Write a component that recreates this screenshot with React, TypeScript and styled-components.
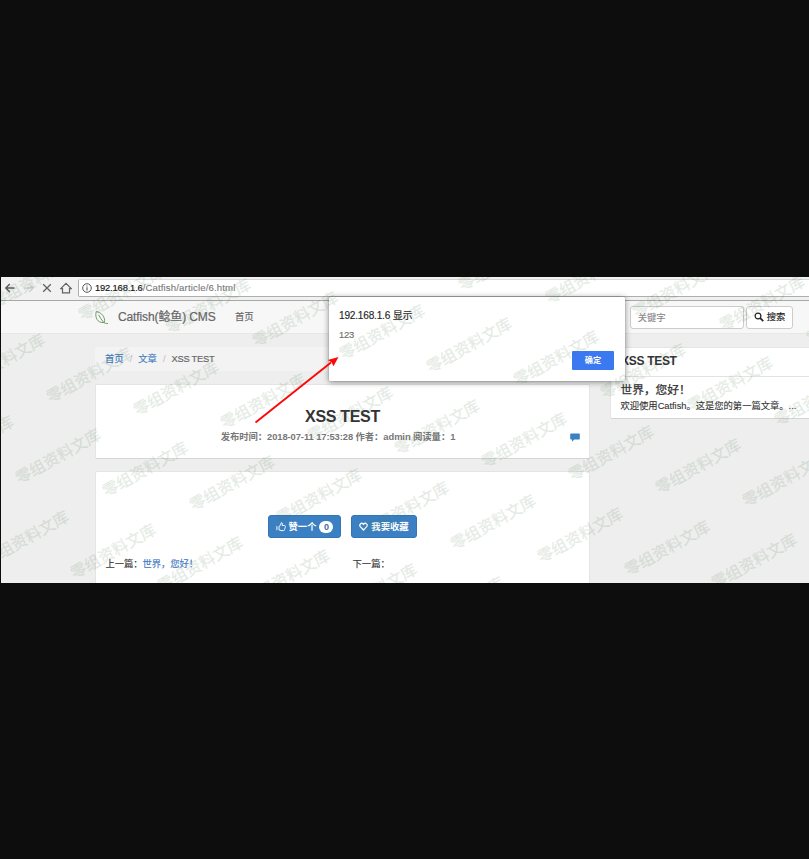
import React from "react";
import styled, { createGlobalStyle } from "styled-components";

const Global = createGlobalStyle`
  * { box-sizing: border-box; }
  html, body { margin: 0; padding: 0; background: #0d0d0d; }
  body { overflow: hidden; font-family: "Liberation Sans", "Noto Sans CJK SC", sans-serif; }
`;

const Stage = styled.div`
  width: 809px;
  height: 859px;
  padding: 277px 0 276px 1px;
  background: #0d0d0d;
`;

const Shot = styled.div`
  position: relative;
  height: 306px;
  overflow: hidden;
  background: #eeeeee;
  color: #333;
  font-size: 9.33px;
  line-height: 14px;
  white-space: nowrap;
`;

const Txt = styled.span<{ $ls?: number; $color?: string; $size?: number; $stroke?: number }>`
  letter-spacing: ${(p) => p.$ls ?? 0}px;
  color: ${(p) => p.$color ?? "inherit"};
  font-size: ${(p) => (p.$size ? `${p.$size}px` : "inherit")};
  -webkit-text-stroke: ${(p) => p.$stroke ?? 0}px currentColor;
`;

const BrowserBar = styled.div`
  display: flex;
  align-items: center;
  height: 24px;
  padding: 0 0 1px 3px;
  background: #f1f1f1;
  border-bottom: 1px solid #a8a8a8;
  svg { flex: none; }
`;

const Tools = styled.div`
  display: flex;
  align-items: center;
  gap: 6.6px;
  width: 74px;
`;

const Address = styled.div`
  display: flex;
  align-items: center;
  flex: 1;
  height: 18px;
  margin-right: -4px;
  padding-left: 2.5px;
  background: #fff;
  border: 1px solid #aeaeae;
  border-top-color: #d8d8d8;
  border-radius: 2px;
  svg { margin-right: 3.5px; }
`;

const Navbar = styled.div`
  display: flex;
  align-items: center;
  height: 33px;
  padding-left: 94px;
  background: #f7f7f7;
  border-bottom: 1px solid #e7e7e7;
  color: #666;
`;

const Brand = styled.div`
  width: 126px;
  padding-left: 9px;
  font-size: 12px;
`;

const Search = styled.div`
  display: flex;
  gap: 2px;
  margin-left: 376px;
`;

const Field = styled.div`
  width: 114px;
  height: 23px;
  padding: 4px 7px;
  background: #fff;
  border: 1px solid #ccc;
  border-radius: 3px;
  color: #888;
`;

const SearchButton = styled.div`
  display: flex;
  align-items: center;
  gap: 3px;
  width: 47px;
  height: 23px;
  padding-left: 7px;
  background: #fff;
  border: 1px solid #ccc;
  border-radius: 3px;
  color: #222;
`;

const Content = styled.div`
  display: flex;
  align-items: flex-start;
  gap: 20px;
  padding: 13px 0 0 94px;
`;

const Main = styled.div`
  display: flex;
  flex-direction: column;
  width: 495px;
`;

const Crumbs = styled.div`
  display: flex;
  gap: 6px;
  height: 24px;
  padding: 5px 10px;
  background: #f3f3f3;
  border-radius: 3px;
  color: #666;
`;

const Link = styled.span`
  color: #3f7ac0;
`;

const Panel = styled.div`
  background: #fff;
  border: 1px solid #e4e4e4;
  border-radius: 2px;
`;

const TitlePanel = styled(Panel)`
  height: 75px;
  margin-top: 13px;
  padding-top: 22px;
  text-align: center;
  border-bottom-color: #d6d6d6;
`;

const Title = styled.div`
  height: 20px;
  line-height: 20px;
  font-size: 16px;
  font-weight: 700;
`;

const MetaRow = styled.div`
  display: grid;
  grid-template-columns: 10px 1fr 19px;
  align-items: center;
  height: 20px;
  color: #777;
  font-weight: 700;
`;

const BodyPanel = styled(Panel)`
  height: 130px;
  margin-top: 12px;
  padding-top: 43px;
`;

const Actions = styled.div`
  display: flex;
  justify-content: center;
  gap: 10px;
`;

const Action = styled.div<{ $w: number }>`
  display: flex;
  align-items: center;
  justify-content: center;
  gap: 3px;
  width: ${(p) => p.$w}px;
  height: 23px;
  background: #3a80c2;
  border: 1px solid #3276b7;
  border-radius: 3px;
  color: #fff;
  font-weight: 700;
`;

const Count = styled.span`
  width: 14px;
  height: 12px;
  border-radius: 6px;
  background: #fff;
  color: #3a70a8;
  font-size: 9px;
  line-height: 12px;
  text-align: center;
`;

const Siblings = styled.div`
  display: grid;
  grid-template-columns: 247px 1fr;
  padding: 19px 0 0 9.5px;
`;

const Side = styled(Panel)`
  flex: 1;
  height: 72px;
  margin-right: -10px;
  border-bottom-color: #d4d4d4;
`;

const SideHead = styled.div`
  height: 29px;
  padding: 6px 10px;
  font-size: 12px;
  font-weight: 700;
  border-bottom: 1px solid #e2e2e2;
`;

const SideBody = styled.div`
  padding: 5px 9.5px;
  line-height: 15px;
`;

const Dialog = styled.div`
  position: absolute;
  left: 328px;
  top: 20px;
  display: flex;
  flex-direction: column;
  width: 296px;
  height: 84px;
  padding: 12px 10px 0;
  background: #fff;
  border-radius: 1px;
  box-shadow: 0 1px 6px rgba(0, 0, 0, 0.45), 0 0 1px rgba(0, 0, 0, 0.5);
  color: #222;
`;

const Message = styled.div`
  margin-top: 5px;
  color: #6e6e6e;
`;

const Confirm = styled.div`
  align-self: flex-end;
  width: 42px;
  height: 19px;
  margin: 9px 1px 0 0;
  background: #3b79f0;
  border-radius: 1px;
  color: #fff;
  font-size: 8.2px;
  font-weight: 700;
  line-height: 19px;
  text-align: center;
`;

const Overlay = styled.svg`
  position: absolute;
  left: -1px;
  top: 0;
  pointer-events: none;
`;

const Marks = styled.div`
  position: absolute;
  inset: 0;
  overflow: hidden;
  pointer-events: none;
`;

const Mark = styled.span`
  position: absolute;
  width: 100px;
  height: 20px;
  margin: -10px 0 0 -50px;
  color: rgb(70, 115, 70);
  opacity: 0.145;
  font-family: "Noto Sans CJK SC", sans-serif;
  font-size: 15.8px;
  line-height: 20px;
  text-align: center;
  -webkit-text-stroke: 0.2px currentColor;
  transform: rotate(-29.2deg);
`;

const marks: { x: number; y: number }[] = [];
for (let a = -10; a < 12; a++) {
  for (let b = -5; b < 6; b++) {
    const x = 381.3 + a * 87 - b * 31.9;
    const y = 55 + a * 13.1 + b * 81.8;
    if (x > -45 && x < 852 && y > -25 && y < 330) marks.push({ x, y });
  }
}

const BackIcon = () => (
  <svg width="12" height="12" viewBox="0 0 12 12" fill="none" stroke="#555b61" strokeWidth="1.4">
    <path d="M10.5 6H2M5.8 2L1.8 6l4 4" />
  </svg>
);
const ForwardIcon = () => (
  <svg width="12" height="12" viewBox="0 0 12 12" fill="none" stroke="#cdd0cd" strokeWidth="1.4">
    <path d="M1.5 6H10M6.2 2l4 4-4 4" />
  </svg>
);
const StopIcon = () => (
  <svg width="12" height="12" viewBox="0 0 12 12" fill="none" stroke="#5d6267" strokeWidth="1.3">
    <path d="M2.2 2.2l7.6 7.6M9.8 2.2L2.2 9.8" />
  </svg>
);
const HomeIcon = () => (
  <svg width="12" height="12" viewBox="0 0 12 12" fill="none" stroke="#5d6267" strokeWidth="1.2">
    <path d="M.8 6.6L6 1.4l5.2 5.2H9.5v4.3h-7V6.6z" />
  </svg>
);
const InfoIcon = () => (
  <svg width="10" height="10" viewBox="0 0 10 10" fill="none" stroke="#555">
    <circle cx="5" cy="5" r="4.3" strokeWidth="1" />
    <path d="M5 4.3v3.2M5 2.4v1.1" strokeWidth="1.1" />
  </svg>
);
const LeafIcon = () => (
  <svg width="14" height="15" viewBox="0 0 14 15" fill="none" stroke="#6f9a68" strokeWidth="1">
    <path d="M1.2 1.5C.2 6 1 11 6.3 12.5h3C10.8 7 6.2 2.3 1.2 1.5z" />
    <path d="M3.6 4.8C5.2 7.4 6.5 10 8.5 12.3c1.2 1 2.6 1.3 4.5 1.2" />
  </svg>
);
const SearchIcon = () => (
  <svg width="10" height="10" viewBox="0 0 10 10" fill="none" stroke="#222">
    <circle cx="4" cy="4" r="2.9" strokeWidth="1.2" />
    <path d="M6.2 6.2l3 3" strokeWidth="1.7" />
  </svg>
);
const CommentIcon = () => (
  <svg width="10" height="9" viewBox="0 0 10 9" fill="#3a80c2">
    <path d="M1 .5h8q.8 0 .8.8v4.4q0 .8-.8.8H4.2L2 8.7V6.5H1q-.8 0-.8-.8V1.3Q.2.5 1 .5z" />
  </svg>
);
const ThumbIcon = () => (
  <svg width="10" height="10" viewBox="0 0 10 10" fill="none" stroke="#fff" strokeWidth=".95">
    <path d="M.9 4.2v4M3 4.4L4.6 3.2 5.2.8c1.3-.4 1.5 1 1 2.7h2.4c.9 0 1 1 .5 1.4.4.5.2 1.1-.2 1.4.2.5 0 1-.4 1.2.1.7-.3 1.1-1 1.1H5L3 7.9z" />
  </svg>
);
const HeartIcon = () => (
  <svg width="9" height="9" viewBox="0 0 9 9" fill="none" stroke="#fff" strokeWidth="1.3">
    <path d="M4.5 8L1.3 4.6C-.2 2.6 2.6-.4 4.5 2.3 6.4-.4 9.2 2.6 7.7 4.6z" />
  </svg>
);

export default function App() {
  return (
    <Stage>
      <Global />
      <Shot>
        <BrowserBar>
          <Tools>
            <BackIcon />
            <ForwardIcon />
            <StopIcon />
            <HomeIcon />
          </Tools>
          <Address>
            <InfoIcon />
            <Txt $ls={-0.15} $color="#111" $stroke={0.15}>192.168.1.6</Txt>
            <Txt $size={9.6} $ls={0.14} $color="#777" $stroke={0.1}>/Catfish/article/6.html</Txt>
          </Address>
        </BrowserBar>
        <Navbar>
          <LeafIcon />
          <Brand><Txt $ls={-0.12} $stroke={0.2}>Catfish(鲶鱼) CMS</Txt></Brand>
          <Txt $stroke={0.15}>首页</Txt>
          <Search>
            <Field><Txt $stroke={0.1}>关键字</Txt></Field>
            <SearchButton><SearchIcon /><Txt $stroke={0.15}>搜索</Txt></SearchButton>
          </Search>
        </Navbar>
        <Content>
          <Main>
            <Crumbs>
              <Link><Txt $stroke={0.15}>首页</Txt></Link>
              <Txt $color="#bbb">/</Txt>
              <Link><Txt $stroke={0.15}>文章</Txt></Link>
              <Txt $color="#bbb">/</Txt>
              <Txt $ls={-0.25} $stroke={0.15}>XSS TEST</Txt>
            </Crumbs>
            <TitlePanel>
              <Title><Txt $ls={-0.3}>XSS TEST</Txt></Title>
              <MetaRow>
                <i />
                <Txt $ls={-0.06}>发布时间：2018-07-11 17:53:28 作者：admin 阅读量：1</Txt>
                <CommentIcon />
              </MetaRow>
            </TitlePanel>
            <BodyPanel>
              <Actions>
                <Action $w={73}><ThumbIcon />赞一个<Count>0</Count></Action>
                <Action $w={66}><HeartIcon />我要收藏</Action>
              </Actions>
              <Siblings>
                <Txt $ls={-0.08} $stroke={0.15}>上一篇：<Link>世界，您好！</Link></Txt>
                <Txt $stroke={0.15}>下一篇：</Txt>
              </Siblings>
            </BodyPanel>
          </Main>
          <Side>
            <SideHead><Txt $ls={-0.3}>XSS TEST</Txt></SideHead>
            <SideBody>
              <div><Txt $size={11.7} $stroke={0.25}>世界，您好！</Txt></div>
              <div><Txt $ls={-0.04} $stroke={0.1}>欢迎使用Catfish。这是您的第一篇文章。...</Txt></div>
            </SideBody>
          </Side>
        </Content>
        <Dialog>
          <Txt $size={10.1} $ls={-0.2} $stroke={0.12}>192.168.1.6 显示</Txt>
          <Message><Txt $ls={-0.25} $stroke={0.15}>123</Txt></Message>
          <Confirm>确定</Confirm>
        </Dialog>
        <Marks>
          {marks.map((m, i) => (
            <Mark key={i} style={{ left: m.x, top: m.y }}>零组资料文库</Mark>
          ))}
        </Marks>
        <Overlay width="809" height="306" viewBox="0 277 809 306">
          <path d="M255.5 422.5L331 362.5" stroke="#fc0808" strokeWidth="1.9" />
          <path d="M338.5 357L333.5 366.2l-1.8-3.6-3.9-2.6z" fill="#fc0808" />
        </Overlay>
      </Shot>
    </Stage>
  );
}
